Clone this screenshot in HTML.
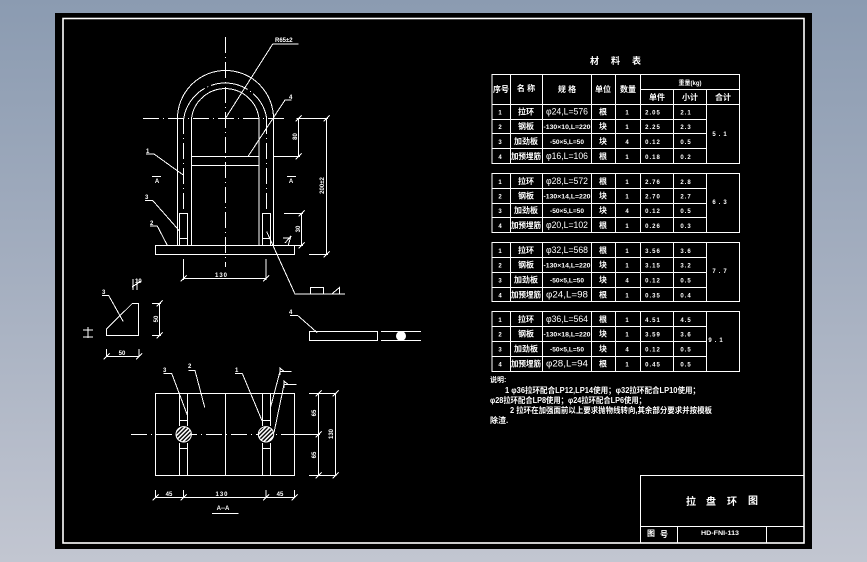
<!DOCTYPE html>
<html lang="zh">
<head>
<meta charset="utf-8">
<title>拉盘环图</title>
<style>
html,body{margin:0;padding:0;width:867px;height:562px;overflow:hidden;background:linear-gradient(180deg,#8b9bb1 0%,#a5afc0 50%,#c2c6d1 100%);}
svg{position:absolute;left:0;top:0;display:block;}
.l{fill:none;stroke:#fff;stroke-width:1;shape-rendering:crispEdges;}
.c{fill:none;stroke:#fff;stroke-width:1;stroke-dasharray:16 4 1 4;shape-rendering:crispEdges;}
text{fill:#fff;font-family:"Liberation Sans","Noto Sans CJK SC",sans-serif;font-size:8px;}
.m{text-anchor:middle;}
.b{font-weight:700;}
.s{font-size:6px;font-weight:700;}
.w{font-weight:700;}
</style>
</head>
<body>
<svg width="867" height="562" viewBox="0 0 867 562" xmlns="http://www.w3.org/2000/svg">
<defs>
<path id="t" d="M-3 3L3 -3" stroke="#fff" stroke-width="1" fill="none" shape-rendering="crispEdges"/>
<pattern id="h" width="3" height="3" patternUnits="userSpaceOnUse" patternTransform="rotate(45)">
<rect width="3" height="3" fill="#000"/><rect width="1.6" height="3" fill="#fff"/>
</pattern>
</defs>
<rect x="55" y="13" width="757" height="536" fill="#000"/>
<rect x="63" y="18.5" width="741" height="524.5" fill="none" stroke="#fff" stroke-width="1.6"/>

<!-- front view -->
<g class="l">
<path d="M177.5 245V118.5A48 48 0 0 1 273.5 118.5V245"/>
<path d="M191.5 245V118.5A34 34 0 0 1 259 118.5V245"/>
<path d="M183.7 118.5A42 42 0 0 1 266.7 118.5" stroke-dasharray="38 3 1 3"/>
<rect x="155.5" y="245.5" width="139" height="9"/>
<path d="M191.5 156.5H259M191.5 165.5H259"/>
<rect x="179.5" y="213.5" width="8" height="32"/>
<rect x="262.5" y="213.5" width="8" height="32"/>
<path d="M179.5 238.5H187.5M262.5 238.5H270.5"/>
<path d="M225.3 118.5L272.7 44H298.5"/>
<path d="M248.3 156L285 100H291.7"/>
<path d="M146 154H154L183.3 175"/>
<path d="M145 200.5H152.7L179.3 230.7"/>
<path d="M150 226H157.3L167.3 245.3"/>
<path d="M152 176.5H161M287 176.5H296"/>
<path d="M273.5 156.5H300M298.5 118.5V157M296.5 118.5H328M326.5 118.5V254.5M309 254.5H328"/>
<path d="M284 213.5H303M301.5 213.5V245.5M293 245.5H303"/>
<path d="M183.5 259V280M266 259V280M183.5 278.5H266"/>
<path d="M266.7 231.7L295 294H345M310.5 294V287.5H323.5V294M331.7 294L339.5 287.5V294"/>
<path d="M283 238L291 238M285 243L291 236L288 246"/>
</g>
<path class="c" d="M225.5 37V267"/>
<path class="c" d="M143 118.5H286"/>
<path class="c" d="M183.7 118V213M266.7 118V213"/>
<use href="#t" x="298.5" y="118.5"/><use href="#t" x="298.5" y="156.5"/>
<use href="#t" x="326.5" y="118.5"/><use href="#t" x="326.5" y="254.5"/>
<use href="#t" x="301.5" y="213.5"/><use href="#t" x="301.5" y="245.5"/>
<use href="#t" x="183.5" y="278.5"/><use href="#t" x="266" y="278.5"/>
<text x="275" y="42" class="s">R65±2</text>
<text x="289" y="99" class="s">4</text>
<text x="146" y="153" class="s">1</text>
<text x="145" y="199" class="s">3</text>
<text x="150" y="225" class="s">2</text>
<text x="157" y="183" class="s m">A</text>
<text x="291" y="183" class="s m">A</text>
<text x="221.5" y="277" class="s m" letter-spacing="1">130</text>
<text transform="translate(297,136.5) rotate(-90)" class="s m">80</text>
<text transform="translate(324,185.5) rotate(-90)" class="s m">200±2</text>
<text transform="translate(300,229) rotate(-90)" class="s m">30</text>

<!-- gusset -->
<g class="l">
<path d="M106.5 329L132.3 303.5H138.5V335.5H106.5Z"/>
<path d="M102 295.5H108.7L123.3 321.7"/>
<path d="M152 303.5H161M159.5 303.5V336M152 335.5H161"/>
<path d="M106.5 349V357M139 349V357M106 356.5H139"/>
<path d="M132 287L141 281M133 279V290M137 279V290"/>
<path d="M83 330H93M83 337H93M88 327V338"/>
</g>
<use href="#t" x="159.5" y="303.5"/><use href="#t" x="159.5" y="335.5"/>
<use href="#t" x="106.5" y="356.5"/><use href="#t" x="139" y="356.5"/>
<text x="102" y="294" class="s">3</text>
<text transform="translate(158,319) rotate(-90)" class="s m">50</text>
<text x="122" y="355" class="s m">50</text>
<text x="135" y="283" class="s">10</text>

<!-- plate -->
<g class="l">
<rect x="309.5" y="331.5" width="68" height="9"/>
<path d="M381 331.5H421M381 340.5H421"/>
<path d="M290 315.5H297.7L317.3 332.7"/>
</g>
<circle cx="401" cy="336" r="5" fill="#fff"/>
<text x="289" y="314" class="s">4</text>

<!-- section A-A -->
<g class="l">
<rect x="155.5" y="393.5" width="139" height="82"/>
<path d="M179.5 393.5V426M187.5 393.5V426M179.5 443V475.5M187.5 443V475.5M225.5 393.5V475.5M262.5 393.5V426M270.5 393.5V426M262.5 443V475.5M270.5 443V475.5"/>
<path d="M179.5 420.5H187.5M179.5 448.5H187.5M262.5 420.5H270.5M262.5 448.5H270.5"/>
<path d="M163.3 373.5H171.7L187.3 415"/>
<path d="M188.3 370.5H195L204.7 407.3"/>
<path d="M235 373.5H242.3L262 420.7"/>
<path d="M270.7 406.7L280 371.5H291.7"/>
<path d="M274 432.7L284 384.5H296.7"/>
<path d="M309 393.5H336.5M318.5 393.5V475.5M335.5 393.5V475.5M309 475.5H336.5M294 434.5H320"/>
<path d="M155.5 490V498M183.5 490V498M266 490V498M294.5 490V498M155 497.5H295"/>
<path d="M212 513.5H238.7"/>
<path d="M284 371.5L280 368V375M288 384.5L284 381V388"/>
</g>
<path class="c" d="M131 434.5H294"/>
<circle cx="183.7" cy="434.3" r="7.7" fill="url(#h)" stroke="#fff"/>
<circle cx="266" cy="434.3" r="7.7" fill="url(#h)" stroke="#fff"/>
<use href="#t" x="318.5" y="393.5"/><use href="#t" x="318.5" y="434.5"/><use href="#t" x="318.5" y="475.5"/>
<use href="#t" x="335.5" y="393.5"/><use href="#t" x="335.5" y="475.5"/>
<use href="#t" x="155.5" y="497.5"/><use href="#t" x="183.5" y="497.5"/><use href="#t" x="266" y="497.5"/><use href="#t" x="294.5" y="497.5"/>
<text x="163" y="372" class="s">3</text>
<text x="188" y="368" class="s">2</text>
<text x="235" y="372" class="s">1</text>
<text x="169" y="496" class="s m">45</text>
<text x="222" y="496" class="s m" letter-spacing="1">130</text>
<text x="280" y="496" class="s m">45</text>
<text x="223" y="510" class="s m">A--A</text>
<text transform="translate(316,413) rotate(-90)" class="s m">65</text>
<text transform="translate(316,455) rotate(-90)" class="s m">65</text>
<text transform="translate(333,434) rotate(-90)" class="s m">130</text>

<!-- table title -->
<text x="590" y="64" class="w" style="font-size:9px">材</text>
<text x="611" y="64" class="w" style="font-size:9px">料</text>
<text x="632" y="64" class="w" style="font-size:9px">表</text>

<!-- table grids -->
<g class="l">
<path d="M492 74.5H739.5V163.5H492ZM492 104.5H739.5M492 119.5H706.5M492 133.5H706.5M492 148.5H706.5M510.5 74.5V163.5M542.5 74.5V163.5M591.5 74.5V163.5M615.5 74.5V163.5M640.5 74.5V163.5M673.5 89V163.5M706.5 89V163.5M640.5 89.5H739.5"/>
<path d="M492 173.5H739.5V232.5H492ZM492 188.5H706.5M492 203.5H706.5M492 217.5H706.5M510.5 173.5V232.5M542.5 173.5V232.5M591.5 173.5V232.5M615.5 173.5V232.5M640.5 173.5V232.5M673.5 173.5V232.5M706.5 173.5V232.5"/>
<path d="M492 242.5H739.5V301.5H492ZM492 257.5H706.5M492 272.5H706.5M492 287.5H706.5M510.5 242.5V301.5M542.5 242.5V301.5M591.5 242.5V301.5M615.5 242.5V301.5M640.5 242.5V301.5M673.5 242.5V301.5M706.5 242.5V301.5"/>
<path d="M492 311.5H739.5V371.5H492ZM492 326.5H706.5M492 341.5H706.5M492 356.5H706.5M510.5 311.5V371.5M542.5 311.5V371.5M591.5 311.5V371.5M615.5 311.5V371.5M640.5 311.5V371.5M673.5 311.5V371.5M706.5 311.5V371.5"/>
</g>

<!-- header -->
<g class="b">
<text x="501" y="92" class="m">序号</text>
<text x="526" y="91" class="m">名 称</text>
<text x="567" y="92" class="m">规 格</text>
<text x="603" y="92" class="m">单位</text>
<text x="628" y="92" class="m">数量</text>
<text x="690" y="85" class="m s">重量(kg)</text>
<text x="657" y="100" class="m">单件</text>
<text x="690" y="100" class="m">小计</text>
<text x="723" y="100" class="m">合计</text>
</g>

<!-- table 1 -->
<g transform="translate(0,114.5)"><text x="500" class="m s">1</text><text x="526" class="m b">拉环</text><text x="567" class="m" style="font-size:9px" textLength="42" lengthAdjust="spacingAndGlyphs">φ24,L=576</text><text x="603" class="m b">根</text><text x="627" class="m s">1</text><text x="653" class="m s" letter-spacing="1">2.05</text><text x="686" class="m s" letter-spacing="1">2.1</text></g>
<g transform="translate(0,129)"><text x="500" class="m s">2</text><text x="526" class="m b">钢板</text><text x="567" class="m s" textLength="47" lengthAdjust="spacingAndGlyphs">-130×10,L=220</text><text x="603" class="m b">块</text><text x="627" class="m s">1</text><text x="653" class="m s" letter-spacing="1">2.25</text><text x="686" class="m s" letter-spacing="1">2.3</text></g>
<g transform="translate(0,144)"><text x="500" class="m s">3</text><text x="526" class="m b">加劲板</text><text x="567" class="m s" textLength="34" lengthAdjust="spacingAndGlyphs">-50×5,L=50</text><text x="603" class="m b">块</text><text x="627" class="m s">4</text><text x="653" class="m s" letter-spacing="1">0.12</text><text x="686" class="m s" letter-spacing="1">0.5</text></g>
<g transform="translate(0,159)"><text x="500" class="m s">4</text><text x="526" class="m b" textLength="30" lengthAdjust="spacingAndGlyphs">加预埋筋</text><text x="567" class="m" style="font-size:9px" textLength="42" lengthAdjust="spacingAndGlyphs">φ16,L=106</text><text x="603" class="m b">根</text><text x="627" class="m s">1</text><text x="653" class="m s" letter-spacing="1">0.18</text><text x="686" class="m s" letter-spacing="1">0.2</text></g>
<text x="721" y="136" class="m s" letter-spacing="3">5.1</text>

<!-- table 2 -->
<g transform="translate(0,184)"><text x="500" class="m s">1</text><text x="526" class="m b">拉环</text><text x="567" class="m" style="font-size:9px" textLength="42" lengthAdjust="spacingAndGlyphs">φ28,L=572</text><text x="603" class="m b">根</text><text x="627" class="m s">1</text><text x="653" class="m s" letter-spacing="1">2.76</text><text x="686" class="m s" letter-spacing="1">2.8</text></g>
<g transform="translate(0,198.5)"><text x="500" class="m s">2</text><text x="526" class="m b">钢板</text><text x="567" class="m s" textLength="47" lengthAdjust="spacingAndGlyphs">-130×14,L=220</text><text x="603" class="m b">块</text><text x="627" class="m s">1</text><text x="653" class="m s" letter-spacing="1">2.70</text><text x="686" class="m s" letter-spacing="1">2.7</text></g>
<g transform="translate(0,213)"><text x="500" class="m s">3</text><text x="526" class="m b">加劲板</text><text x="567" class="m s" textLength="34" lengthAdjust="spacingAndGlyphs">-50×5,L=50</text><text x="603" class="m b">块</text><text x="627" class="m s">4</text><text x="653" class="m s" letter-spacing="1">0.12</text><text x="686" class="m s" letter-spacing="1">0.5</text></g>
<g transform="translate(0,228)"><text x="500" class="m s">4</text><text x="526" class="m b" textLength="30" lengthAdjust="spacingAndGlyphs">加预埋筋</text><text x="567" class="m" style="font-size:9px" textLength="42" lengthAdjust="spacingAndGlyphs">φ20,L=102</text><text x="603" class="m b">根</text><text x="627" class="m s">1</text><text x="653" class="m s" letter-spacing="1">0.26</text><text x="686" class="m s" letter-spacing="1">0.3</text></g>
<text x="721" y="204" class="m s" letter-spacing="3">6.3</text>

<!-- table 3 -->
<g transform="translate(0,253)"><text x="500" class="m s">1</text><text x="526" class="m b">拉环</text><text x="567" class="m" style="font-size:9px" textLength="42" lengthAdjust="spacingAndGlyphs">φ32,L=568</text><text x="603" class="m b">根</text><text x="627" class="m s">1</text><text x="653" class="m s" letter-spacing="1">3.56</text><text x="686" class="m s" letter-spacing="1">3.6</text></g>
<g transform="translate(0,267.5)"><text x="500" class="m s">2</text><text x="526" class="m b">钢板</text><text x="567" class="m s" textLength="47" lengthAdjust="spacingAndGlyphs">-130×14,L=220</text><text x="603" class="m b">块</text><text x="627" class="m s">1</text><text x="653" class="m s" letter-spacing="1">3.15</text><text x="686" class="m s" letter-spacing="1">3.2</text></g>
<g transform="translate(0,282.5)"><text x="500" class="m s">3</text><text x="526" class="m b">加劲板</text><text x="567" class="m s" textLength="34" lengthAdjust="spacingAndGlyphs">-50×5,L=50</text><text x="603" class="m b">块</text><text x="627" class="m s">4</text><text x="653" class="m s" letter-spacing="1">0.12</text><text x="686" class="m s" letter-spacing="1">0.5</text></g>
<g transform="translate(0,297.5)"><text x="500" class="m s">4</text><text x="526" class="m b" textLength="30" lengthAdjust="spacingAndGlyphs">加预埋筋</text><text x="567" class="m" style="font-size:9px" textLength="42" lengthAdjust="spacingAndGlyphs">φ24,L=98</text><text x="603" class="m b">根</text><text x="627" class="m s">1</text><text x="653" class="m s" letter-spacing="1">0.35</text><text x="686" class="m s" letter-spacing="1">0.4</text></g>
<text x="721" y="273" class="m s" letter-spacing="3">7.7</text>

<!-- table 4 -->
<g transform="translate(0,322)"><text x="500" class="m s">1</text><text x="526" class="m b">拉环</text><text x="567" class="m" style="font-size:9px" textLength="42" lengthAdjust="spacingAndGlyphs">φ36,L=564</text><text x="603" class="m b">根</text><text x="627" class="m s">1</text><text x="653" class="m s" letter-spacing="1">4.51</text><text x="686" class="m s" letter-spacing="1">4.5</text></g>
<g transform="translate(0,336.5)"><text x="500" class="m s">2</text><text x="526" class="m b">钢板</text><text x="567" class="m s" textLength="47" lengthAdjust="spacingAndGlyphs">-130×18,L=220</text><text x="603" class="m b">块</text><text x="627" class="m s">1</text><text x="653" class="m s" letter-spacing="1">3.59</text><text x="686" class="m s" letter-spacing="1">3.6</text></g>
<g transform="translate(0,351.5)"><text x="500" class="m s">3</text><text x="526" class="m b">加劲板</text><text x="567" class="m s" textLength="34" lengthAdjust="spacingAndGlyphs">-50×5,L=50</text><text x="603" class="m b">块</text><text x="627" class="m s">4</text><text x="653" class="m s" letter-spacing="1">0.12</text><text x="686" class="m s" letter-spacing="1">0.5</text></g>
<g transform="translate(0,366.5)"><text x="500" class="m s">4</text><text x="526" class="m b" textLength="30" lengthAdjust="spacingAndGlyphs">加预埋筋</text><text x="567" class="m" style="font-size:9px" textLength="42" lengthAdjust="spacingAndGlyphs">φ28,L=94</text><text x="603" class="m b">根</text><text x="627" class="m s">1</text><text x="653" class="m s" letter-spacing="1">0.45</text><text x="686" class="m s" letter-spacing="1">0.5</text></g>
<text x="717" y="342" class="m s" letter-spacing="3">9.1</text>

<!-- notes -->
<text x="490" y="382" class="b" style="font-size:7px">说明:</text>
<text x="505" y="393" class="w" style="font-size:8px" textLength="195" lengthAdjust="spacingAndGlyphs">1  φ36拉环配合LP12,LP14使用；φ32拉环配合LP10使用；</text>
<text x="490" y="403" class="w" style="font-size:8px" textLength="156" lengthAdjust="spacingAndGlyphs">φ28拉环配合LP8使用；φ24拉环配合LP6使用；</text>
<text x="510" y="413" class="w" style="font-size:8px" textLength="202" lengthAdjust="spacingAndGlyphs">2 拉环在加强面前以上要求抛物线转向,其余部分要求并按模板</text>
<text x="490" y="423" class="w" style="font-size:8px">除渣.</text>

<!-- title block -->
<g class="l">
<path d="M640.5 543V475.5H804M640.5 526.5H804M677.5 526.5V543M766.5 526.5V543"/>
</g>
<text x="691" y="505" class="m w" style="font-size:10px">拉</text>
<text x="711" y="505" class="m w" style="font-size:10px">盘</text>
<text x="732" y="505" class="m w" style="font-size:10px">环</text>
<text x="753" y="504" class="m w" style="font-size:10px">图</text>
<text x="651" y="536" class="m b">图</text>
<text x="664" y="537" class="m b">号</text>
<text x="720" y="535" class="m s" textLength="38" lengthAdjust="spacingAndGlyphs">HD-FNI-113</text>
</svg>
</body>
</html>
